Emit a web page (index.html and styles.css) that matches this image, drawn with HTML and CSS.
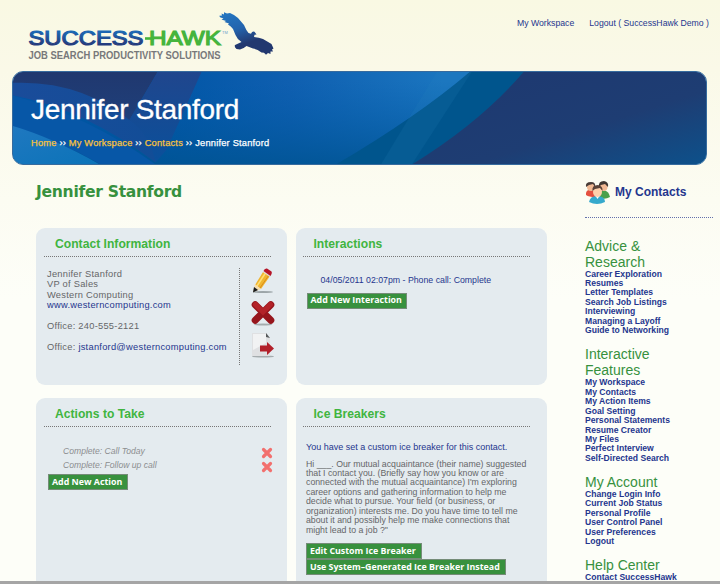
FILE: index.html
```html
<!DOCTYPE html>
<html lang="en">
<head>
<meta charset="utf-8">
<title>Jennifer Stanford - SuccessHawk</title>
<link rel="stylesheet" href="styles.css">
</head>
<body>
<div class="page">
  <header class="header">
    <svg class="logo" width="250" height="54" viewBox="26 8 250 54" role="img">
      <defs>
        <linearGradient id="blue" x1="0" y1="0" x2="0" y2="1"><stop offset="0.2" stop-color="#1c68b4"/><stop offset="0.8" stop-color="#253b7c"/></linearGradient>
        <linearGradient id="bird" x1="0" y1="0" x2="0.4" y2="1"><stop offset="0" stop-color="#2478c2"/><stop offset="0.45" stop-color="#2364ae"/><stop offset="0.8" stop-color="#22386f"/></linearGradient>
      </defs>
      <text class="word" x="28.500" y="45" textLength="115" lengthAdjust="spacingAndGlyphs" fill="url(#blue)" stroke="url(#blue)">SUCCESS</text>
      <path d="M145 38.500h9" stroke="#45b43c" stroke-width="2.600"/>
      <text class="word" x="149" y="45" textLength="72" lengthAdjust="spacingAndGlyphs" fill="#45b43c" stroke="#45b43c">HAWK</text>
      <text class="tm" x="222" y="33.500">TM</text>
      <text class="tag" x="28.500" y="58.500" textLength="192" lengthAdjust="spacingAndGlyphs">JOB SEARCH PRODUCTIVITY SOLUTIONS</text>
      <path fill="url(#bird)" d="M219.300 15.700L222 15.500 221.500 13.500 224 14.500 224 12.300 227 13.500 230 13 Q235 15 238 18 L244 25 Q246 30 248.500 33 L251 33.800 Q252 31 254.500 31.700 L256.500 34.500 254.500 34.800 254 37 Q259 37.500 263 39 L271.500 44 273.500 48.500 272 49.500 273 51.500 270.500 51.500 270.500 54 268 53 266 54.800 264 52.800 261.500 52.500 Q257 49 253 48.500 L246.500 46 Q243 49 240 49.500 L236.500 49 Q234 46.500 235 45 L241.500 42 Q237 39 235.500 35 L233 29 Q231 26 228 24.500 L229 23.500 224.500 22 226 21 221.500 19.500 223.500 18.500 220 17.300z"/>
    </svg>
    <nav class="top-nav"><a>My Workspace</a><a>Logout ( SuccessHawk Demo )</a></nav>
  </header>

  <section class="banner">
    <svg class="banner-art" viewBox="0 0 695 94" preserveAspectRatio="none">
      <defs>
        <linearGradient id="base" x1="0" y1="0" x2="1" y2="0"><stop offset="0.2" stop-color="#0055a5"/><stop offset="0.4" stop-color="#0f5fb0"/><stop offset="0.62" stop-color="#1a75bf"/></linearGradient>
        <linearGradient id="fade" x1="0" y1="0" x2="0" y2="1"><stop offset="0.1" stop-color="#0059a8" stop-opacity="0"/><stop offset="1" stop-color="#005493" stop-opacity=".85"/></linearGradient>
        <linearGradient id="navy" x1="0" y1="0" x2="1" y2="1"><stop offset="0" stop-color="#1e3870"/><stop offset=".6" stop-color="#1e3d73"/><stop offset="1" stop-color="#0d518b"/></linearGradient>
        <linearGradient id="dark" x1="0" y1="0" x2="0" y2="1"><stop offset="0" stop-color="#20386f"/><stop offset=".6" stop-color="#1f3e78"/><stop offset="1" stop-color="#1b4585"/></linearGradient>
        <linearGradient id="band" x1="0" y1="0" x2="0" y2="1"><stop offset="0" stop-color="#20468d"/><stop offset="1" stop-color="#0a509b"/></linearGradient>
        <linearGradient id="sweep" x1="0" y1="0" x2="1" y2="0"><stop offset="0" stop-color="#1a4c9a"/><stop offset="1" stop-color="#124d97"/></linearGradient>
        <linearGradient id="corner" x1="0" y1="0" x2="1" y2="1"><stop offset="0" stop-color="#1f78c0"/><stop offset="1" stop-color="#0b73b8"/></linearGradient>
      </defs>
      <rect width="695" height="94" fill="url(#base)"/>
      <rect width="695" height="94" fill="url(#fade)"/>
      <path fill="url(#dark)" d="M0 0H145L108 64Q60 24 0 12z"/>
      <path fill="url(#band)" d="M145 0H189L154 79L143 92Q130 72 108 64z"/>
      <path fill="url(#sweep)" d="M0 11Q70 8 122 53Q138 67 143 92Q70 37 0 24z"/>
      <path fill="#0757a7" d="M0 24Q76 45 143 94H88Q47 70 0 56z"/>
      <path fill="url(#corner)" d="M0 55Q40 67 87 94H0z"/>
      <path fill="#00558d" d="M458 0H514Q470 53 400 94H324Q406 45 458 0z"/>
      <path fill="url(#navy)" d="M512 0H695V94H400Q469 51 512 0z"/>
      <path fill="#2b86bd" opacity=".14" d="M425 0H460L400 94H369z"/>
    </svg>
    <h1>Jennifer Stanford</h1>
    <p class="crumbs"><a>Home</a> <span>››</span> <a>My Workspace</a> <span>››</span> <a>Contacts</a> <span>››</span> Jennifer Stanford</p>
  </section>

  <div class="columns">
    <main>
      <h2>Jennifer Stanford</h2>
      <div class="panels">
        <section class="panel">
          <h3>Contact Information</h3>
          <div class="contact">
            <div class="details">
              <p>Jennifer Stanford<br>VP of Sales<br>Western Computing<br><a class="site">www.westerncomputing.com</a></p>
              <p>Office: 240-555-2121</p>
              <p>Office: <a>jstanford@westerncomputing.com</a></p>
            </div>
            <div class="tools">
              <svg width="26" height="26" viewBox="0 0 26 26"><ellipse cx="13" cy="24" rx="10" ry="1" fill="#9ca5a8"/><path fill="#f0b52e" d="M5 17L13 4l7 4-9 13z"/><path d="M7 18L15.500 5" stroke="#ffdf75" stroke-width="1.500"/><path d="M10 20L19 7" stroke="#d98b1d" stroke-width="1"/><path fill="#f6ddae" d="M5 16l6 5-8 3z"/><path fill="#17191b" d="M4 19l4 3-5 2.500z"/><path fill="#ddd" d="M13 4l1-1 7 5-1 1z"/><path fill="#b51528" d="M13.500 3q1-3 3.500-2.500l4.500 3q1 1-1 4.500z"/></svg>
              <svg width="26" height="26" viewBox="0 0 26 26"><ellipse cx="13" cy="24.500" rx="9" ry="1" fill="#a5acae"/><path d="M5.200 4.700l15.600 15.600M20.800 4.700L5.200 20.300" stroke="#96151c" stroke-width="7" stroke-linecap="round"/><path d="M5.500 4.500L13 12l7.500-7.500" stroke="#b32228" stroke-width="5" fill="none" stroke-linecap="round"/></svg>
              <svg width="26" height="26" viewBox="0 0 26 26"><ellipse cx="13" cy="24.500" rx="11" ry="1" fill="#a5acae"/><path fill="#dfe0e2" d="M2 1h14l4 5v18H2z"/><path fill="#f1f2f3" d="M3 2h13v9L3 18z"/><path fill="#55585a" d="M16 1l4 5-4-1z"/><path fill="#b2202a" d="M10 13.500h7V10l7 6.500-7 6.500v-3.500h-7z"/></svg>
            </div>
          </div>
        </section>

        <section class="panel right">
          <h3>Interactions</h3>
          <p class="interaction"><a>04/05/2011 02:07pm - Phone call: Complete</a></p>
          <button class="add-interaction">Add New Interaction</button>
        </section>

        <section class="panel">
          <h3>Actions to Take</h3>
          <ul class="actions">
            <li><em>Complete: Call Today</em><svg width="12" height="12" viewBox="0 0 12 12"><path d="M2.500 2.500l7 7M9.500 2.500l-7 7"/></svg></li>
            <li><em>Complete: Follow up call</em><svg width="12" height="12" viewBox="0 0 12 12"><path d="M2.500 2.500l7 7M9.500 2.500l-7 7"/></svg></li>
          </ul>
          <button class="add-action">Add New Action</button>
        </section>

        <section class="panel right">
          <h3>Ice Breakers</h3>
          <p class="notice"><a>You have set a custom ice breaker for this contact.</a></p>
          <p class="script">Hi ___. Our mutual acquaintance (their name) suggested<br>that I contact you. (Briefly say how you know or are<br>connected with the mutual acquaintance) I'm exploring<br>career options and gathering information to help me<br>decide what to pursue. Your field (or business, or<br>organization) interests me. Do you have time to tell me<br>about it and possibly help me make connections that<br>might lead to a job ?"</p>
          <div class="stack"><button class="edit">Edit Custom Ice Breaker</button><button class="system">Use System–Generated Ice Breaker Instead</button></div>
        </section>
      </div>
    </main>

    <aside>
      <div class="my-contacts">
        <svg width="26" height="24" viewBox="0 0 26 24">
          <path fill="#e5503f" d="M1 12q1-4 6-3l5 2-2 5q-6 0-9-2z"/><path fill="#4aa04b" d="M14 11q7-4 10 2l1 3q-5 3-10 1z"/>
          <circle cx="6" cy="6" r="4" fill="#f1b994"/><path fill="#493c38" d="M1 6q-1-5 5-5 5 0 4 5L8 3 4 4z"/>
          <circle cx="18.500" cy="6" r="4" fill="#f1b994"/><path fill="#3f3732" d="M14 6q-1-6 5-6 5 1 4 6l-3-3-4 1z"/>
          <path fill="#36a9cc" d="M4 21q1-6 8-6 8 0 8 6-8 4-16 0z"/><path fill="#fff" d="M10.500 15h4l-2 3z"/>
          <ellipse cx="12.500" cy="11" rx="4.500" ry="5" fill="#ffd0ab"/><path fill="#594238" d="M7.500 10q-1-6 5.500-6 5 1 4.500 6l-2.500-3-5 1z"/>
        </svg>
        <a>My Contacts</a>
      </div>
      <section class="links"><h4>Advice &amp;<br>Research</h4><ul><li>Career Exploration</li><li>Resumes</li><li>Letter Templates</li><li>Search Job Listings</li><li>Interviewing</li><li>Managing a Layoff</li><li>Guide to Networking</li></ul></section>
      <section class="links"><h4>Interactive<br>Features</h4><ul><li>My Workspace</li><li>My Contacts</li><li>My Action Items</li><li>Goal Setting</li><li>Personal Statements</li><li>Resume Creator</li><li>My Files</li><li>Perfect Interview</li><li>Self-Directed Search</li></ul></section>
      <section class="links"><h4>My Account</h4><ul><li>Change Login Info</li><li>Current Job Status</li><li>Personal Profile</li><li>User Control Panel</li><li>User Preferences</li><li>Logout</li></ul></section>
      <section class="links"><h4>Help Center</h4><ul><li>Contact SuccessHawk</li></ul></section>
    </aside>
  </div>
  <footer></footer>
</div>
</body>
</html>
```
FILE: styles.css
```css
* { box-sizing: border-box; }
body, h1, h2, h3, h4, p, ul { margin: 0; padding: 0; }
body { font: 9.3px/10.55px "Liberation Sans", Arial, sans-serif; color: #656668; overflow: hidden; }
ul { list-style: none; }
svg { display: block; flex: none; }
a { color: #24368e; }

.page { width: 720px; height: 584px; display: grid; grid-template-rows: 70.5px 94.5px 416px 3px; overflow: hidden; background: linear-gradient(#f9f9e3, #faf9e8 70px, #fcfcf2 200px, #fdfef8 300px, #fdfef8); }
.header { display: flex; justify-content: space-between; padding: 8px 11px 0 26px; }
.word { font: 19.5px "Liberation Sans", sans-serif; stroke-width: 1.1px; }
.tm { font: 4px "Liberation Sans", sans-serif; fill: #6c9dca; }
.tag { font: bold 10.5px "Liberation Sans", sans-serif; fill: #77787a; }
.top-nav { display: flex; gap: 15px; padding-top: 10px; font-size: 8.7px; }

.banner { position: relative; width: 695px; margin-left: 12px; padding: 20px 18px; border-radius: 11px; overflow: hidden; border: 1px solid #376b9e; color: #fff; }
.banner-art { position: absolute; inset: 0; width: 100%; height: 100%; }
.banner h1 { position: relative; font-weight: normal; font-size: 28px; line-height: 36px; letter-spacing: -.3px; -webkit-text-stroke: .3px; }
.crumbs { position: relative; margin-top: 9px; font-size: 9.3px; line-height: 12px; letter-spacing: .2px; -webkit-text-stroke: .25px; white-space: nowrap; }
.crumbs a { color: #f8c23c; }

.columns { display: grid; grid-template-columns: 511px 1fr; column-gap: 38px; padding-left: 36px; overflow: hidden; }
h2 { height: 63px; padding-top: 17px; font: bold 15.6px/21px "DejaVu Sans", Verdana, sans-serif; letter-spacing: -.3px; color: #37913e; }
.panels { display: grid; grid-template-columns: 251px 251px; gap: 13.5px 9px; grid-template-rows: 156.5px 200px; }
.panel { background: #e4ebef; border-radius: 9px; padding: 9px 16px 0 8px; }
.panel.right { padding: 9px 17px 0 6.5px; }
h3 { height: 20px; padding-left: 11px; border-bottom: 1px dotted #777; font-size: 12.15px; line-height: 15px; color: #40b53f; }
.contact { display: flex; justify-content: space-between; padding: 11px 0 0 3px; white-space: nowrap; }
.details { padding-top: .5px; letter-spacing: .26px; }
.details p + p { margin-top: 10.5px; }
.tools { flex: none; height: 97px; padding-left: 10px; border-left: 1px dotted #777; display: flex; flex-direction: column; gap: 6px; margin-right: -5px; }
.interaction { padding: 18px 0 0 18px; font-size: 8.75px; white-space: nowrap; }
button { display: block; height: 16px; padding: 0 3px; margin: 0; border: 1px solid #758c78; border-radius: 0; background: #38913e; color: #fff; font: bold 8.85px/13px "Open Sans", "DejaVu Sans", sans-serif; white-space: nowrap; text-align: left; }
.add-interaction { margin: 7px 0 0 4px; width: 100px; }
.actions { padding: 17px 0 0 19px; font-size: 8.6px; color: #8c8e90; }
.actions li { display: flex; justify-content: space-between; height: 14px; line-height: 14px; }
.actions svg { margin: 3px -2px 0 0; fill: none; stroke: #f2706e; stroke-width: 3.2; stroke-linecap: round; }
.add-action { margin: 2px 0 0 4px; width: 80px; }
.notice { padding: 15px 0 0 3.5px; font-size: 9px; white-space: nowrap; }
.script { padding: 7px 0 0 3.5px; font-size: 8.75px; line-height: 9.45px; white-space: nowrap; }
.stack { padding: 8px 0 0 3.5px; }
.edit { width: 116px; }
.system { width: 200px; }

.my-contacts { display: flex; align-items: center; gap: 4px; height: 52.5px; padding-top: 4px; border-bottom: 1px dotted #6370ab; margin-right: 7px; font-weight: bold; font-size: 12px; white-space: nowrap; }
.links { color: #24368e; font-weight: bold; font-size: 8.6px; line-height: 9.45px; margin-bottom: 10.6px; white-space: nowrap; }
.my-contacts + .links { margin-top: 20px; }
h4 { font-size: 14px; line-height: 16px; font-weight: normal; color: #37913e; }
footer { background: #a5a5a5; }
```
